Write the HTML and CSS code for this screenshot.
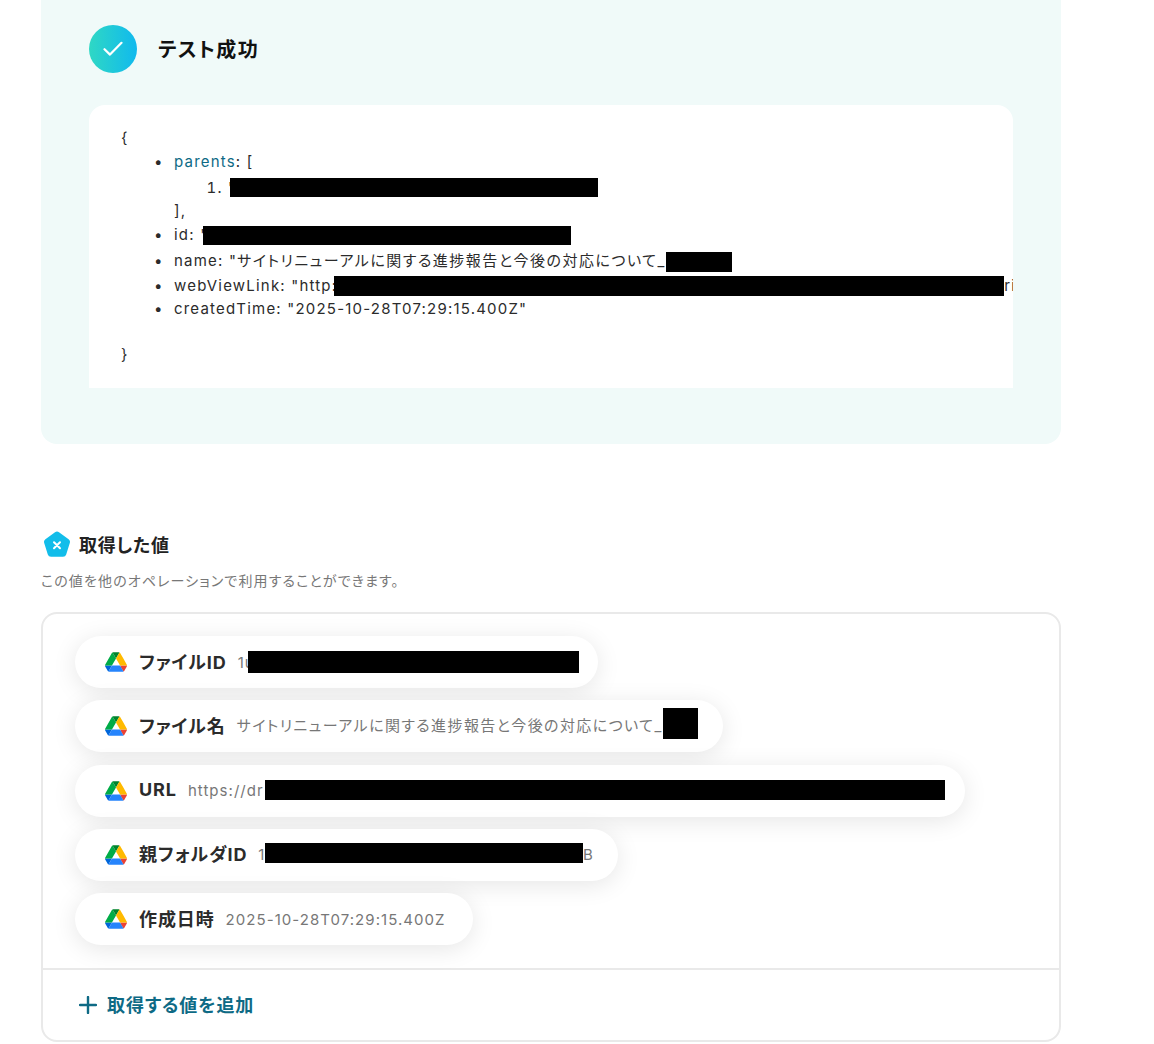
FILE: index.html
```html
<!DOCTYPE html>
<html lang="ja">
<head>
<meta charset="utf-8">
<title>テスト成功</title>
<link rel="stylesheet" href="styles.css">
</head>
<body>
<svg class="defs" width="0" height="0" aria-hidden="true">
  <symbol id="drive" viewBox="0 0 87.3 78">
    <path d="m6.6 66.85 3.85 6.65c.8 1.4 1.95 2.5 3.3 3.3l13.75-23.8h-27.5c0 1.55.4 3.1 1.2 4.5z" fill="#0066da"/>
    <path d="m43.65 25-13.75-23.8c-1.35.8-2.5 1.9-3.3 3.3l-25.4 44a9.06 9.06 0 0 0 -1.2 4.5h27.5z" fill="#00ac47"/>
    <path d="m73.55 76.8c1.35-.8 2.5-1.9 3.3-3.3l1.6-2.75 7.65-13.25c.8-1.4 1.2-2.95 1.2-4.5h-27.502l5.852 11.5z" fill="#ea4335"/>
    <path d="m43.65 25 13.75-23.8c-1.35-.8-2.9-1.2-4.5-1.2h-18.5c-1.6 0-3.15.45-4.5 1.2z" fill="#00832d"/>
    <path d="m59.8 53h-32.3l-13.75 23.8c1.35.8 2.9 1.2 4.5 1.2h50.8c1.6 0 3.15-.45 4.5-1.2z" fill="#2684fc"/>
    <path d="m73.4 26.5-12.7-22c-.8-1.4-1.95-2.5-3.3-3.3l-13.75 23.8 16.15 28h27.45c0-1.55-.4-3.1-1.2-4.5z" fill="#ffba00"/>
  </symbol>
</svg>
<main class="page">
  <section class="result">
    <header class="result-head">
      <span class="check">
        <svg width="20" height="16" viewBox="0 0 20 16"><path d="M1.5 8.2 7 13.6 18.5 1.8" fill="none" stroke="#fff" stroke-width="2.2" stroke-linecap="round" stroke-linejoin="round"/></svg>
      </span>
      <h1 class="result-title">テスト成功</h1>
    </header>
    <div class="json">
      <div class="brace">{</div>
      <ul class="json-list">
        <li class="l-parents"><span class="key">parents</span>: [
          <ol class="json-ol"><li class="l-one">"<span class="redact r-a"></span></li></ol>
          <div class="close">],</div>
        </li>
        <li class="l-id">id: "<span class="redact r-b"></span></li>
        <li class="l-name">name: "<span class="json-jp">サイトリニューアルに関する進捗報告と今後の対応について_</span><span class="redact r-c"></span></li>
        <li class="l-web">webViewLink: "http:<span class="redact r-d"></span>ri</li>
        <li class="l-time">createdTime: "2025-10-28T07:29:15.400Z"</li>
      </ul>
      <div class="brace brace-end">}</div>
    </div>
  </section>

  <section class="values">
    <h2 class="values-title">
      <svg class="penta" width="28" height="27" viewBox="0 0 28 27"><path d="M12 1.2a3.4 3.4 0 0 1 4 0l9.6 7a3.4 3.4 0 0 1 1.2 3.8l-3.6 11.4a3.4 3.4 0 0 1-3.2 2.4H8a3.4 3.4 0 0 1-3.2-2.4L1.2 12a3.4 3.4 0 0 1 1.2-3.8z" fill="#12bdea"/><path d="M11 11.2 17 17.2M17 11.2 11 17.2" stroke="#fff" stroke-width="2" stroke-linecap="round"/></svg>
      <span class="lift">取得した値</span>
    </h2>
    <p class="values-desc">この値を他のオペレーションで利用することができます。</p>
    <div class="box">
      <div class="pills">
        <div class="pill p1"><svg class="drive"><use href="#drive"/></svg><b class="pill-key">ファイルID</b><span class="pill-val">1u<span class="redact r-e"></span></span></div>
        <div class="pill p2"><svg class="drive"><use href="#drive"/></svg><b class="pill-key">ファイル名</b><span class="pill-val"><span class="pill-jp">サイトリニューアルに関する進捗報告と今後の対応について_</span><span class="redact r-f"></span></span></div>
        <div class="pill p3"><svg class="drive"><use href="#drive"/></svg><b class="pill-key">URL</b><span class="pill-val">https://dr<span class="redact r-g"></span></span></div>
        <div class="pill p4"><svg class="drive"><use href="#drive"/></svg><b class="pill-key">親フォルダID</b><span class="pill-val">1a<span class="redact r-h"></span>B</span></div>
        <div class="pill p5"><svg class="drive"><use href="#drive"/></svg><b class="pill-key">作成日時</b><span class="pill-val">2025-10-28T07:29:15.400Z</span></div>
      </div>
      <div class="add">
        <svg width="18" height="18" viewBox="0 0 18 18"><path d="M9 1v16M1 9h16" stroke="#0e6a85" stroke-width="2.4" stroke-linecap="round"/></svg>
        <span class="lift">取得する値を追加</span>
      </div>
    </div>
  </section>
</main>
</body>
</html>
```

FILE: styles.css
```css
* { box-sizing: border-box; }
html, body { margin: 0; padding: 0; background: #fff; }
body {
  font-family: Inter, "Noto Sans CJK JP", sans-serif;
  font-feature-settings: "palt";
  color: #2b2b2b;
  height: 1044px;
  overflow: hidden;
}
.defs { position: absolute; }
.page { width: 1020px; margin-left: 41px; }

.result {
  background: #f0faf9;
  border-radius: 0 0 16px 16px;
  padding: 25px 48px 56px;
  height: 444px;
}
.result-head { display: flex; align-items: center; gap: 21px; height: 48px; }
.check {
  width: 48px; height: 48px; border-radius: 50%;
  display: flex; align-items: center; justify-content: center;
  background: linear-gradient(90deg, #2fd8c4, #10b9ee);
}
.result-title { margin: 0; font-size: 20px; font-weight: 700; color: #111; line-height: 1; letter-spacing: 0.07em; padding-top: 1px; }

.json {
  margin-top: 32px;
  height: 283px;
  background: #fff;
  border-radius: 16px 16px 0 0;
  padding: 21px 0 0 32px;
  font-size: 15px;
  letter-spacing: 0.08em;
  line-height: 24px;
  overflow: hidden;
  white-space: nowrap;
}
.brace { height: 24px; }
.brace-end { margin-top: 22px; }
.json-list { margin: 0; padding: 0 0 0 53px; list-style: disc; }
.json-list > li { height: 24px; }
.json-list > li::marker { content: "•  "; font-size: 15px; }
.json-list > li.l-parents { height: 73px; }
.json-list > li.l-id { height: 26px; }
.json-list > li.l-name { height: 25px; }
.json-list > li.l-web { height: 23px; }
.key { color: #0e6a85; }
.json-jp { letter-spacing: 1.5px; }
.json-ol { margin: 0; padding: 0 0 0 54px; height: 25px; padding-top: 2px; }
.close { height: 24px; }
.redact { display: inline-block; background: #000; vertical-align: top; }
.r-a { width: 368px; height: 19px; margin-left: -6px; margin-top: 2px; }
.r-b { width: 368px; height: 19px; margin-left: -5px; margin-top: 3px; }
.r-c { width: 66px; height: 20px; margin-top: 3px; }
.r-d { width: 670px; height: 20px; margin-left: -3px; margin-top: 2px; }
.r-e { width: 331px; height: 22px; margin-left: -7px; }
.r-f { width: 35px; height: 31px; margin-top: -5px; }
.r-g { width: 680px; height: 20px; margin-left: 1px; margin-top: -2px; }
.r-h { width: 318px; height: 20px; margin-left: -10px; margin-top: -4px; }

.values { padding-top: 87px; }
.values-title {
  margin: 0 0 0 2px; display: flex; align-items: center; gap: 8px;
  font-size: 18px; font-weight: 700; color: #222; height: 27px; letter-spacing: 0.04em;
}
.lift { margin-bottom: 2px; }
.values-desc { margin: 13px 0 0; font-size: 14px; line-height: 20px; color: #777; letter-spacing: 0.08em; }
.box {
  margin-top: 21px;
  height: 430px;
  border: 2px solid #e9e9e9;
  border-radius: 16px;
  display: flex; flex-direction: column;
}
.pills {
  height: 356px;
  padding: 22px 0 0 32px;
  border-bottom: 2px solid #e9e9e9;
  display: flex; flex-direction: column; align-items: flex-start; gap: 12.25px;
}
.pill {
  height: 52px;
  border-radius: 26px;
  background: #fff;
  box-shadow: 0 4px 24px rgba(0, 0, 0, 0.1);
  display: flex; align-items: center;
  padding: 0 0 0 30px;
  white-space: nowrap;
}
.p1 { width: 523px; }
.p2 { width: 648px; }
.p3 { width: 890px; }
.p4 { width: 543px; }
.p5 { width: 398px; }
.drive { width: 22px; height: 20px; margin-right: 12px; flex: none; }
.pill-key { font-size: 18px; font-weight: 700; color: #2b2b2b; letter-spacing: 0.05em; margin-bottom: 3px; }
.pill-val { font-size: 15px; color: #777; letter-spacing: 0.07em; margin-left: 11px; display: flex; align-items: center; }
.pill-jp { letter-spacing: 1.4px; margin-bottom: 4px; }
.add {
  flex: 1; display: flex; align-items: center; gap: 10px;
  padding: 0 0 0 36px;
  font-size: 18px; font-weight: 700; color: #0e6a85; letter-spacing: 0.05em;
}
```
